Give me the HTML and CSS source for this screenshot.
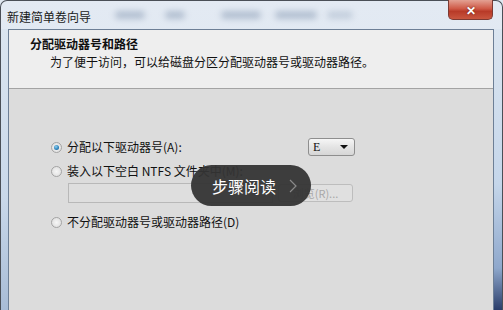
FILE: index.html
```html
<!DOCTYPE html>
<html>
<head>
<meta charset="utf-8">
<link rel="stylesheet" href="styles.css">
</head>
<body>
<div class="window">
  <div class="titlebar">
    <span class="title">新建简单卷向导</span>
    <span class="blurs">
      <i class="blob b1"></i><i class="blob b2"></i><i class="blob b3"></i><i class="blob b4"></i><i class="blob b5"></i>
    </span>
    <span class="close">✕</span>
  </div>
  <div class="frame">
    <div class="edge-left"></div>
    <div class="client">
      <div class="header">
        <div class="h-title">分配驱动器号和路径</div>
        <div class="h-sub">为了便于访问，可以给磁盘分区分配驱动器号或驱动器路径。</div>
      </div>
      <div class="body">
        <div class="rows">
          <div class="row">
            <span class="radio checked"></span>
            <span class="label">分配以下驱动器号(A):</span>
            <span class="combo"><span class="combo-val">E</span><span class="arrow"></span></span>
          </div>
          <div class="row">
            <span class="radio"></span>
            <span class="label">装入以下空白 NTFS 文件夹中(M):</span>
          </div>
          <div class="row path">
            <span class="input"></span>
            <span class="btn">浏览(R)...</span>
          </div>
          <div class="row last">
            <span class="radio"></span>
            <span class="label">不分配驱动器号或驱动器路径(D)</span>
          </div>
        </div>
        <div class="pill"><span>步骤阅读</span><svg class="chev" width="8" height="14" viewBox="0 0 8 14"><polyline points="1,1 7,7 1,13" fill="none" stroke="#8a8a8a" stroke-width="1.2"/></svg></div>
      </div>
    </div>
    <div class="edge-right"></div>
  </div>
</div>
</body>
</html>
```
FILE: styles.css
```css
* { box-sizing: border-box; }
html, body { margin: 0; padding: 0; }
body {
  width: 503px; height: 310px; overflow: hidden;
  font-family: "Noto Sans CJK SC", "Noto Sans", sans-serif;
  font-size: 12px; color: #111;
  background: #dfe7f0;
}
.window {
  width: 503px; height: 310px;
  display: flex; flex-direction: column;
  background: linear-gradient(180deg, #e3eaf3 0%, #d8e2ee 100%);
  border-top: 1px solid #4a4f57;
  border-left: 1px solid #4a4f57;
  border-right: 1px solid #4a4f57;
  border-top-left-radius: 7px;
  border-top-right-radius: 7px;
}
.titlebar {
  height: 28px; flex: none;
  display: flex; align-items: flex-start;
}
.title {
  margin: 7px 0 0 6px; line-height: 18px; color: #1a1a1a; font-size: 12px;
}
.blurs { display: flex; flex: 1; margin-top: 10px; }
.blob {
  display: block; height: 8px; border-radius: 4px;
  background: #8a9cb4; filter: blur(3px); opacity: .55;
}
.b1 { width: 30px; margin-left: 24px; }
.b2 { width: 20px; margin-left: 20px; }
.b3 { width: 40px; margin-left: 36px; }
.b4 { width: 42px; margin-left: 14px; }
.b5 { width: 26px; margin-left: 10px; opacity: .35; }
.close {
  width: 45px; height: 20px; margin-right: 9px; margin-top: -1px;
  background: linear-gradient(180deg, #e3a193 0%, #cf5a47 45%, #b83a28 60%, #c9563f 100%);
  border: 1px solid #7c3a33; border-top: none;
  border-radius: 0 0 5px 5px;
  color: #fff; font-weight: bold; font-size: 12px;
  display: flex; align-items: center; justify-content: center;
  text-shadow: 0 0 2px #5a1a10;
}
.frame { flex: 1; display: flex; min-height: 0; }
.edge-left {
  width: 7px; flex: none;
  background: linear-gradient(180deg, #dbe5f0 0%, #c9d8ea 60%, #a8bcd6 100%);
}
.edge-right {
  width: 8px; flex: none;
  background: linear-gradient(180deg, #dbe5f0 0%, #c5d6ea 55%, #8fa8cc 85%, #2a3d6a 100%);
}
.client {
  flex: 1; display: flex; flex-direction: column;
  border: 1px solid #6d7f96; border-bottom: none;
  background: #dcdcdc;
}
.header {
  height: 59px; flex: none;
  background: #eeeeee;
  border-bottom: 1px solid #a3a3a3;
  padding: 6px 0 0 21px;
}
.h-title { font-weight: bold; line-height: 16px; font-size: 12px; }
.h-sub { line-height: 17px; padding-left: 20px; margin-top: 1px; }
.body { flex: 1; position: relative; padding: 49px 0 0 42px; }
.rows { width: 304px; display: flex; flex-direction: column; }
.row { display: flex; align-items: center; height: 18px; margin-bottom: 6px; }
.row.path { height: 20px; margin: -3px 0 10px 17px; }
.row.last { margin-bottom: 0; }
.radio {
  width: 11px; height: 11px; border-radius: 50%; flex: none;
  border: 1px solid #a4a4a4;
  background: radial-gradient(circle, #f6f6f6 0%, #dadada 100%);
  margin-right: 5px; position: relative;
}
.radio.checked::after {
  content: ""; position: absolute; left: 2px; top: 2px;
  width: 5px; height: 5px; border-radius: 50%;
  background: radial-gradient(circle at 40% 35%, #8fd0f0 0%, #2a7fb8 60%, #1c5e8f 100%);
}
.label { line-height: 18px; white-space: nowrap; }
.combo {
  margin-left: auto; width: 47px; height: 18px;
  border: 1px solid #8e8e8e; border-radius: 3px;
  background: linear-gradient(180deg, #f6f6f6 0%, #e4e4e4 50%, #d6d6d6 100%);
  display: flex; align-items: center; justify-content: space-between;
  padding: 0 6px 0 4px; font-family: "Liberation Serif", serif; font-size: 12px;
}
.arrow {
  width: 0; height: 0; border-left: 4px solid transparent; border-right: 4px solid transparent;
  border-top: 4px solid #111;
}
.input {
  width: 205px; height: 20px; border: 1px solid #b8b8b8; background: #dedede;
}
.btn {
  margin-left: 5px; width: 75px; height: 18px;
  border: 1px solid #bdbdbd; border-radius: 3px;
  color: #a8a8a8; display: flex; align-items: center; justify-content: center;
  font-size: 11px; background: #e0e0e0;
}
.pill {
  position: absolute; left: 182px; top: 76px;
  width: 120px; height: 41px; border-radius: 21px;
  background: rgba(52, 52, 52, 0.95);
  color: #fff; font-size: 16px;
  display: flex; align-items: center; padding-left: 21px;
}
.chev { margin-left: 13px; }
```
